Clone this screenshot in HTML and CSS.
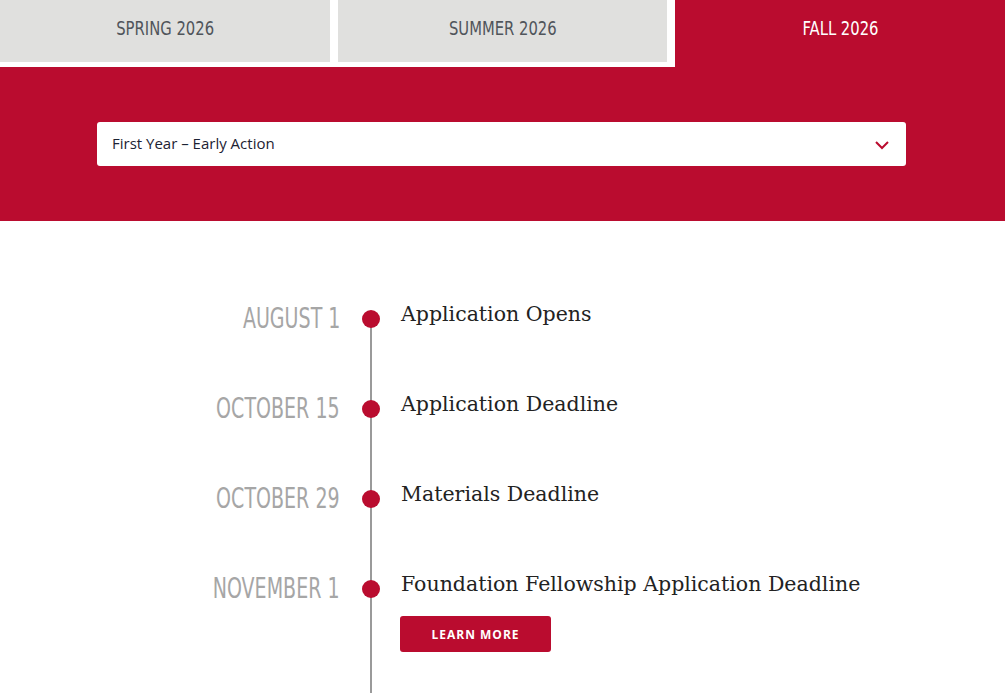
FILE: index.html
```html
<!DOCTYPE html>
<html lang="en">
<head>
<meta charset="utf-8">
<title>Deadlines</title>
<link rel="stylesheet" href="styles.css">
</head>
<body>
<div class="tabs">
  <div class="tab"><span class="tab-label">SPRING 2026</span></div>
  <div class="tab"><span class="tab-label">SUMMER 2026</span></div>
  <div class="tab tab-active"><span class="tab-label">FALL 2026</span></div>
</div>
<div class="band">
  <div class="select">
    <span class="select-text">First Year – Early Action</span>
    <svg class="chev" width="16" height="10" viewBox="0 0 16 10"><polyline points="2,2 8,8 14,2" fill="none" stroke="#ba0c2f" stroke-width="2"/></svg>
  </div>
</div>
<div class="timeline">
  <div class="row row-first">
    <div class="date"><span class="date-text">AUGUST 1</span></div>
    <div class="mid"><span class="dot"></span></div>
    <div class="content"><div class="title">Application Opens</div></div>
  </div>
  <div class="row">
    <div class="date"><span class="date-text">OCTOBER 15</span></div>
    <div class="mid"><span class="dot"></span></div>
    <div class="content"><div class="title">Application Deadline</div></div>
  </div>
  <div class="row">
    <div class="date"><span class="date-text">OCTOBER 29</span></div>
    <div class="mid"><span class="dot"></span></div>
    <div class="content"><div class="title">Materials Deadline</div></div>
  </div>
  <div class="row row-last">
    <div class="date"><span class="date-text">NOVEMBER 1</span></div>
    <div class="mid"><span class="dot"></span></div>
    <div class="content"><div class="title">Foundation Fellowship Application Deadline</div><a class="btn">LEARN MORE</a></div>
  </div>
</div>
</body>
</html>
```
FILE: styles.css
```css
html, body { margin: 0; padding: 0; background: #fff; }
body { overflow: hidden; height: 693px; }
.tabs { display: flex; gap: 8px; height: 67px; }
.tab {
  flex: 1;
  height: 62px;
  background: #e0e0de;
  display: flex; align-items: center; justify-content: center;
  font-family: "DejaVu Sans", sans-serif;
  font-size: 20px;
  color: #50555b;
  padding-bottom: 7px;
  box-sizing: border-box;
}
.tab-label { display: inline-block; transform: scaleX(0.74); white-space: nowrap; }
.tab-active { background: #ba0c2f; color: #fff; height: 67px; padding-bottom: 12px; }
.band { background: #ba0c2f; padding: 55px 0; }
.select {
  margin-left: 97px; width: 809px; height: 44px; box-sizing: border-box;
  background: #fff; border-radius: 3px;
  display: flex; align-items: center; justify-content: space-between;
  padding: 0 16px 2px 15px;
}
.select-text { font-family: "Open Sans", sans-serif; font-size: 15px; color: #1c2233; }
.chev { display: block; margin-top: 4px; }
.timeline { padding-top: 79px; }
.row { display: grid; grid-template-columns: 340px 60px 1fr; height: 90px; }
.date {
  text-align: right;
  font-family: "DejaVu Sans", sans-serif;
  font-weight: 400;
  font-size: 28px;
  color: #a6a6a6;
  padding-top: 3px;
  line-height: 32px;
}
.date-text { display: inline-block; transform: scaleX(0.68); transform-origin: right center; white-space: nowrap; }
.mid {
  background: linear-gradient(#9a9a9a, #9a9a9a) no-repeat 30px 0 / 2px 100%;
}
.row-first .mid { background-position: 30px 19px; }
.row-last { height: 200px; }
.dot {
  display: block; width: 18px; height: 18px; border-radius: 50%;
  background: #ba0c2f; margin: 10px 0 0 22px;
}
.content { padding-left: 1px; }
.title {
  font-family: "DejaVu Serif", "Liberation Serif", serif;
  font-size: 20.5px; line-height: 28px; color: #222;
}
.btn {
  display: inline-flex; align-items: center; justify-content: center;
  width: 151px; height: 36px; margin-top: 18px; margin-left: -1px;
  background: #ba0c2f; border-radius: 3px; color: #fff;
  font-family: "Open Sans", sans-serif; font-weight: 700; font-size: 12px; letter-spacing: 1px;
}
```
